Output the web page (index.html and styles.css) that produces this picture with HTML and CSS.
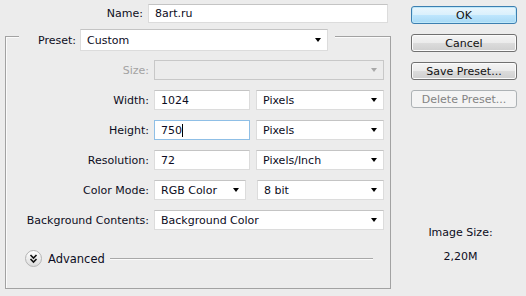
FILE: index.html
```html
<!DOCTYPE html>
<html lang="en">

<head>
    <meta charset="UTF-8">
    <title>New</title>
    <link rel="stylesheet" href="styles.css">
</head>

<body>
    <div class="dialog">
        <div class="main">
            <div class="row namerow">
                <span class="label">Name:</span>
                <div class="field wide-name">8art.ru</div>
            </div>

            <div class="group">
                <div class="grouphead">
                    <span class="label presetlabel">Preset:</span>
                    <div class="select presetsel">Custom</div>
                </div>

                <div class="rows">
                    <div class="row">
                        <span class="label disabled">Size:</span>
                        <div class="select full disabled"></div>
                    </div>
                    <div class="row">
                        <span class="label">Width:</span>
                        <div class="field num">1024</div>
                        <div class="select unit">Pixels</div>
                    </div>
                    <div class="row">
                        <span class="label">Height:</span>
                        <div class="field num focus">750<span class="caret"></span></div>
                        <div class="select unit">Pixels</div>
                    </div>
                    <div class="row">
                        <span class="label">Resolution:</span>
                        <div class="field num">72</div>
                        <div class="select unit">Pixels/Inch</div>
                    </div>
                    <div class="row">
                        <span class="label">Color Mode:</span>
                        <div class="select mode">RGB Color</div>
                        <div class="select depth">8 bit</div>
                    </div>
                    <div class="row">
                        <span class="label">Background Contents:</span>
                        <div class="select full">Background Color</div>
                    </div>
                </div>

                <div class="advanced">
                    <span class="toggle">
                        <svg width="17" height="17" viewBox="0 0 17 17">
                            <path d="M5.5 5 L8.5 8 L11.5 5 M5.5 9 L8.5 12 L11.5 9" fill="none" stroke="#111" stroke-width="1.6"/>
                        </svg>
                    </span>
                    <span class="advtext">Advanced</span>
                    <span class="advline"></span>
                </div>
            </div>
        </div>

        <div class="side">
            <div class="btn primary">OK</div>
            <div class="btn">Cancel</div>
            <div class="btn">Save Preset...</div>
            <div class="btn off">Delete Preset...</div>

            <div class="imgsize">
                <p>Image Size:</p>
                <p>2,20M</p>
            </div>
        </div>
    </div>
</body>

</html>
```

FILE: styles.css
```css
body {
    margin: 0;
    width: 526px;
    height: 296px;
    background-color: #ececec;
    font-family: "DejaVu Sans", sans-serif;
    font-size: 11px;
    color: #0c0c22;
    overflow: hidden;
}

.dialog {
    display: grid;
    grid-template-columns: 411px 106px;
}

.main {
    padding-top: 4px;
}

.row {
    display: flex;
    align-items: center;
    height: 20px;
}

.label {
    width: 143px;
    padding-right: 5px;
    text-align: right;
    white-space: nowrap;
}

.label.disabled {
    color: #a3a3a3;
}

.namerow {
    height: 19px;
}

.field,
.select {
    box-sizing: border-box;
    height: 100%;
    background-color: #fff;
    border: 1px solid #dcdcdc;
    border-top-color: #c4c4c4;
    padding: 0 6px;
    display: flex;
    align-items: center;
    position: relative;
    white-space: nowrap;
}

.wide-name {
    width: 240px;
}

.num {
    width: 96px;
    margin-right: 6px;
}

.focus {
    border-color: #8fbfe6;
}

.caret {
    width: 1px;
    height: 13px;
    background-color: #000;
}

.select::after {
    content: "";
    position: absolute;
    right: 6px;
    top: 50%;
    margin-top: -2px;
    border-left: 3.5px solid transparent;
    border-right: 3.5px solid transparent;
    border-top: 4px solid #000;
}

.select.disabled {
    background-color: #ececec;
    border-color: #c8c8c8;
}

.select.disabled::after {
    border-top-color: #a8a8a8;
}

.full {
    width: 230px;
}

.unit {
    width: 128px;
}

.mode {
    width: 92px;
    margin-right: 11px;
}

.depth {
    width: 127px;
}

.group {
    margin: 13px 0 0 5px;
    width: 386px;
    height: 253px;
    box-sizing: border-box;
    border: 1px solid #a2a2a2;
    box-shadow: inset 1px 1px 0 #fbfbfb;
}

.grouphead {
    display: flex;
    align-items: center;
    width: fit-content;
    height: 22px;
    margin: -8px 0 0 13px;
    padding-right: 7px;
    background-color: #ececec;
}

.presetlabel {
    width: 57px;
    padding-right: 4px;
}

.presetsel {
    width: 248px;
}

.rows {
    display: flex;
    flex-direction: column;
    gap: 10px;
    margin-top: 9px;
}

.advanced {
    display: flex;
    align-items: center;
    margin: 20px 17px 0 19px;
    height: 17px;
}

.toggle {
    width: 17px;
    height: 17px;
    box-sizing: border-box;
    border: 1px solid #b4b4b4;
    border-radius: 50%;
    background: linear-gradient(#ffffff, #dcdcdc);
    display: flex;
    align-items: center;
    justify-content: center;
}

.toggle svg {
    margin: -1px;
}

.advtext {
    margin-left: 6px;
    font-size: 11.5px;
}

.advline {
    flex: 1;
    margin-left: 5px;
    height: 1px;
    background-color: #a8a8a8;
    box-shadow: 0 1px 0 #fbfbfb;
}

.side {
    padding-top: 6px;
    display: flex;
    flex-direction: column;
    gap: 10px;
}

.btn {
    height: 18px;
    box-sizing: border-box;
    border: 1px solid #707070;
    border-radius: 3px;
    background: linear-gradient(#f4f4f4 0%, #ebebeb 50%, #dcdcdc 51%, #cfcfcf 100%);
    box-shadow: inset 0 0 0 1px #fbfbfb;
    display: flex;
    align-items: center;
    justify-content: center;
    color: #111;
}

.btn.primary {
    border-color: #3c7fb1;
    background: linear-gradient(#eaf6fd 0%, #d9f0fc 50%, #bee6fd 51%, #a7d9f5 100%);
    box-shadow: inset 0 0 0 1px #bfe8f9;
}

.btn.off {
    border-color: #adb2b5;
    background: #f4f4f4;
    box-shadow: none;
    color: #838383;
}

.imgsize {
    margin-top: 108px;
    margin-right: 7px;
    text-align: center;
}

.imgsize p {
    margin: 0 0 11px;
}
```
